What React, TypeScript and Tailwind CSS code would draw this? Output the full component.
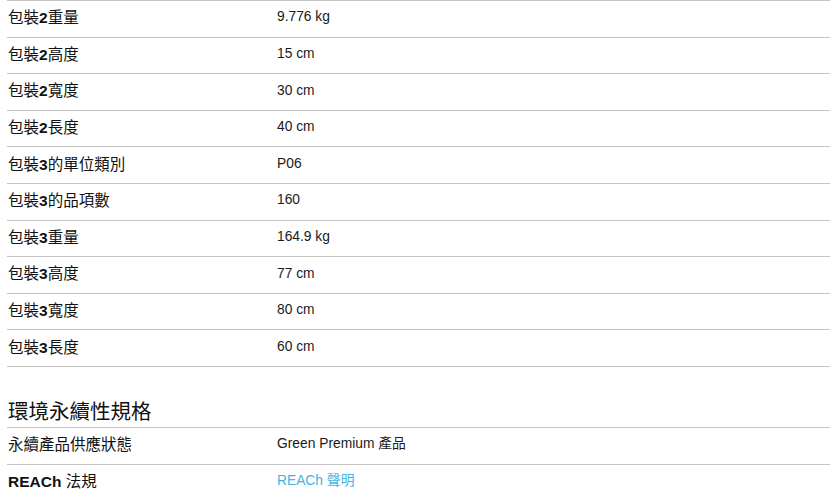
import React from "react";

type Row = { label: React.ReactNode; value: React.ReactNode };

const B = ({ children }: { children: React.ReactNode }) => (
  <span className="font-bold">{children}</span>
);

const rows: Row[] = [
  { label: <>包裝<B>2</B>重量</>, value: "9.776 kg" },
  { label: <>包裝<B>2</B>高度</>, value: "15 cm" },
  { label: <>包裝<B>2</B>寬度</>, value: "30 cm" },
  { label: <>包裝<B>2</B>長度</>, value: "40 cm" },
  { label: <>包裝<B>3</B>的單位類別</>, value: "P06" },
  { label: <>包裝<B>3</B>的品項數</>, value: "160" },
  { label: <>包裝<B>3</B>重量</>, value: "164.9 kg" },
  { label: <>包裝<B>3</B>高度</>, value: "77 cm" },
  { label: <>包裝<B>3</B>寬度</>, value: "80 cm" },
  { label: <>包裝<B>3</B>長度</>, value: "60 cm" },
];

function TableRow({ label, value }: Row) {
  return (
    <div className="grid grid-cols-[270px_1fr] h-[36.6px] items-center border-b border-[#c4c4c4] pb-[2px]">
      <div className="pl-[1px] text-[15.5px] text-[#111]">{label}</div>
      <div className="text-[13.8px] text-[#1a1a1a]">{value}</div>
    </div>
  );
}

export default function App() {
  return (
    <div
      className="w-[830px] h-[499px] overflow-hidden bg-white pl-[7px]"
      style={{ fontFamily: '"Liberation Sans", Arial, "Noto Sans CJK TC", sans-serif' }}
    >
      <div className="border-t border-[#c4c4c4]">
        {rows.map((r, i) => (
          <TableRow key={i} {...r} />
        ))}
      </div>
      <div className="pt-[32px] pb-[2px] pl-[1px] text-[20.5px] leading-[26px] text-[#111]">
        環境永續性規格
      </div>
      <div className="border-t border-[#c4c4c4]">
        <TableRow label="永續產品供應狀態" value="Green Premium 產品" />
        <TableRow
          label={<><B>REACh</B> 法規</>}
          value={<span className="text-[#42b4e6]">REACh 聲明</span>}
        />
      </div>
    </div>
  );
}
